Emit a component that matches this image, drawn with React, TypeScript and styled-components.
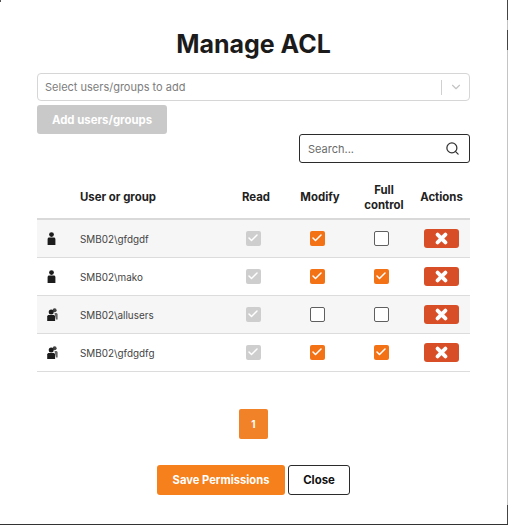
import React from "react";
import styled, { createGlobalStyle } from "styled-components";
import { Check, ChevronDown, Search as SearchIcon } from "lucide-react";

const GlobalStyle = createGlobalStyle`
  html, body {
    margin: 0;
    background: #fff;
  }
  * {
    box-sizing: border-box;
  }
`;

const Modal = styled.div`
  position: relative;
  width: 508px;
  height: 525px;
  padding: 29px 38px 0 37px;
  background: #fff;
  border-bottom: 1px solid #333;
  font-family: Inter, "Liberation Sans", sans-serif;
  color: #1c1c1c;
  overflow: hidden;

  /* backdrop showing round the edge of the dialog */
  &::after {
    content: "";
    position: absolute;
    top: 0;
    right: 0;
    width: 1px;
    height: 100%;
    background: linear-gradient(
      #444 0 20px,
      #c4c4c4 20px 30px,
      #444 30px 50px,
      #c4c4c4 50px 505px,
      #444 505px
    );
  }

  &::before {
    content: "";
    position: absolute;
    top: 0;
    left: 0;
    width: 1px;
    height: 2px;
    background: #555;
  }
`;

const Title = styled.h1`
  margin: 0 0 13px;
  height: 31px;
  line-height: 31px;
  font-size: 25px;
  font-weight: 700;
  text-align: center;
  color: #1b1b1b;
`;

const Select = styled.div`
  height: 28px;
  display: flex;
  align-items: center;
  padding-left: 7px;
  border: 1px solid #d6d6d6;
  border-radius: 4px;
  font-size: 11px;
  color: #7d7d7d;
`;

const SelectLabel = styled.span`
  flex: 1;
`;

const SelectDivider = styled.span`
  width: 1px;
  height: 15px;
  background: #d0d0d0;
`;

const SelectArrow = styled.span`
  width: 27px;
  display: flex;
  justify-content: center;
  color: #c4c4c4;
`;

const AddButton = styled.button`
  display: block;
  width: 130px;
  height: 29px;
  margin-top: 4px;
  padding: 0;
  border: 0;
  border-radius: 3px;
  background: #c9c9c9;
  color: #fff;
  font-family: inherit;
  font-size: 11.4px;
  font-weight: 700;
`;

const SearchRow = styled.div`
  display: flex;
  justify-content: flex-end;
`;

const SearchBox = styled.div`
  width: 171px;
  height: 29px;
  display: flex;
  align-items: center;
  justify-content: space-between;
  padding: 0 9px 0 8px;
  border: 1.5px solid #2b2b2b;
  border-radius: 3px;
  font-size: 11px;
  color: #6b6b6b;
`;

const SearchGlyph = styled(SearchIcon)`
  color: #333;
`;

const Columns = `
  display: grid;
  grid-template-columns: 43px 141px 64px 64px 64px 57px;
  align-items: center;
  justify-items: center;
`;

const HeaderRow = styled.div`
  ${Columns}
  height: 45px;
  margin-top: 12px;
  padding-top: 2px;
  border-bottom: 2px solid #d9d9d9;
  font-size: 11.4px;
  font-weight: 700;
  line-height: 15px;
  text-align: center;
  color: #222;
`;

const NameHeader = styled.div`
  grid-column: 2;
  justify-self: start;
`;

const BoxHeader = styled.div`
  padding-left: 6px;
`;

const Row = styled.div<{ $shaded: boolean }>`
  ${Columns}
  height: 38px;
  border-bottom: 1px solid #dcdcdc;
  background: ${(p) => (p.$shaded ? "#f6f6f6" : "#fff")};
`;

const IconCell = styled.div`
  justify-self: start;
  display: flex;
  margin-left: 10px;
`;

const Name = styled.div`
  justify-self: start;
  padding-top: 1px;
  font-size: 9.9px;
  color: #444;
`;

const Box = styled.span<{ $state: "disabled" | "on" | "off" }>`
  width: 15px;
  height: 15px;
  margin-bottom: 1px;
  display: flex;
  align-items: center;
  justify-content: center;
  border-radius: 2px;
  color: #fff;
  background: ${(p) =>
    p.$state === "disabled" ? "#cecece" : p.$state === "on" ? "#f47216" : "#fff"};
  border: ${(p) => (p.$state === "off" ? "1.5px solid #5f5f5f" : "0")};
`;

const RemoveButton = styled.button`
  width: 35px;
  height: 19px;
  display: flex;
  align-items: center;
  justify-content: center;
  padding: 0;
  border: 0;
  border-radius: 3px;
  background: #d84e27;
  color: #fff;
`;

const Pagination = styled.div`
  display: flex;
  justify-content: center;
  margin-top: 37px;
`;

const PageButton = styled.div`
  width: 29px;
  height: 30px;
  display: flex;
  align-items: center;
  justify-content: center;
  border-radius: 2px;
  background: #f28227;
  color: #fff;
  font-size: 10px;
  font-weight: 700;
`;

const Footer = styled.div`
  display: flex;
  justify-content: center;
  gap: 3px;
  margin-top: 26px;
`;

const SaveButton = styled.button`
  width: 128px;
  height: 30px;
  padding: 0;
  border: 0;
  border-radius: 3px;
  background: #f6801c;
  color: #fff;
  font-family: inherit;
  font-size: 11.2px;
  font-weight: 700;
`;

const CloseButton = styled.button`
  width: 62px;
  height: 30px;
  padding: 0;
  border: 1.5px solid #2b2b2b;
  border-radius: 3px;
  background: #fff;
  color: #111;
  font-family: inherit;
  font-size: 11.4px;
  font-weight: 700;
`;

function UserIcon() {
  return (
    <svg width="9" height="13" viewBox="0 0 9 13" fill="#1c1c1c">
      <circle cx="4.5" cy="2.6" r="2.4" />
      <path d="M.6 13V6.9C.6 6 1.3 5.4 2.2 5.4h4.6c.9 0 1.6.6 1.6 1.5V13z" />
    </svg>
  );
}

function GroupIcon() {
  return (
    <svg width="11" height="13" viewBox="0 0 11 13" fill="#1c1c1c">
      <circle cx="7.6" cy="2.2" r="2" fill="#444" />
      <path d="M7.5 5h1.6c.9 0 1.5.6 1.5 1.5v5H9z" fill="#666" />
      <circle cx="4.2" cy="4" r="2.5" />
      <path d="M.2 13V8.6c0-1 .8-1.7 1.8-1.7h4.3c1 0 1.8.7 1.8 1.7V13z" />
    </svg>
  );
}

function RemoveIcon() {
  return (
    <svg width="13" height="13" viewBox="0 0 13 13">
      <path d="M2.6 2.6l7.8 7.8M10.4 2.6l-7.8 7.8" stroke="#fff" strokeWidth="3.8" strokeLinecap="round" />
    </svg>
  );
}

type BoxState = "on" | "off";

const rows: { name: string; group: boolean; modify: BoxState; full: BoxState }[] = [
  { name: "SMB02\\gfdgdf", group: false, modify: "on", full: "off" },
  { name: "SMB02\\mako", group: false, modify: "on", full: "on" },
  { name: "SMB02\\allusers", group: true, modify: "off", full: "off" },
  { name: "SMB02\\gfdgdfg", group: true, modify: "on", full: "on" },
];

function CheckBox({ state }: { state: "disabled" | BoxState }) {
  return (
    <Box $state={state}>{state !== "off" && <Check size={12} strokeWidth={3} />}</Box>
  );
}

export default function App() {
  return (
    <Modal>
      <GlobalStyle />
      <Title>Manage ACL</Title>
      <Select>
        <SelectLabel>Select users/groups to add</SelectLabel>
        <SelectDivider />
        <SelectArrow>
          <ChevronDown size={14} />
        </SelectArrow>
      </Select>
      <AddButton>Add users/groups</AddButton>
      <SearchRow>
        <SearchBox>
          <span>Search...</span>
          <SearchGlyph size={15} strokeWidth={2} />
        </SearchBox>
      </SearchRow>
      <HeaderRow>
        <NameHeader>User or group</NameHeader>
        <BoxHeader>Read</BoxHeader>
        <BoxHeader>Modify</BoxHeader>
        <BoxHeader>
          Full
          <br />
          control
        </BoxHeader>
        <div>Actions</div>
      </HeaderRow>
      {rows.map((row, i) => (
        <Row key={row.name} $shaded={i % 2 === 0}>
          <IconCell>{row.group ? <GroupIcon /> : <UserIcon />}</IconCell>
          <Name>{row.name}</Name>
          <CheckBox state="disabled" />
          <CheckBox state={row.modify} />
          <CheckBox state={row.full} />
          <RemoveButton>
            <RemoveIcon />
          </RemoveButton>
        </Row>
      ))}
      <Pagination>
        <PageButton>1</PageButton>
      </Pagination>
      <Footer>
        <SaveButton>Save Permissions</SaveButton>
        <CloseButton>Close</CloseButton>
      </Footer>
    </Modal>
  );
}
